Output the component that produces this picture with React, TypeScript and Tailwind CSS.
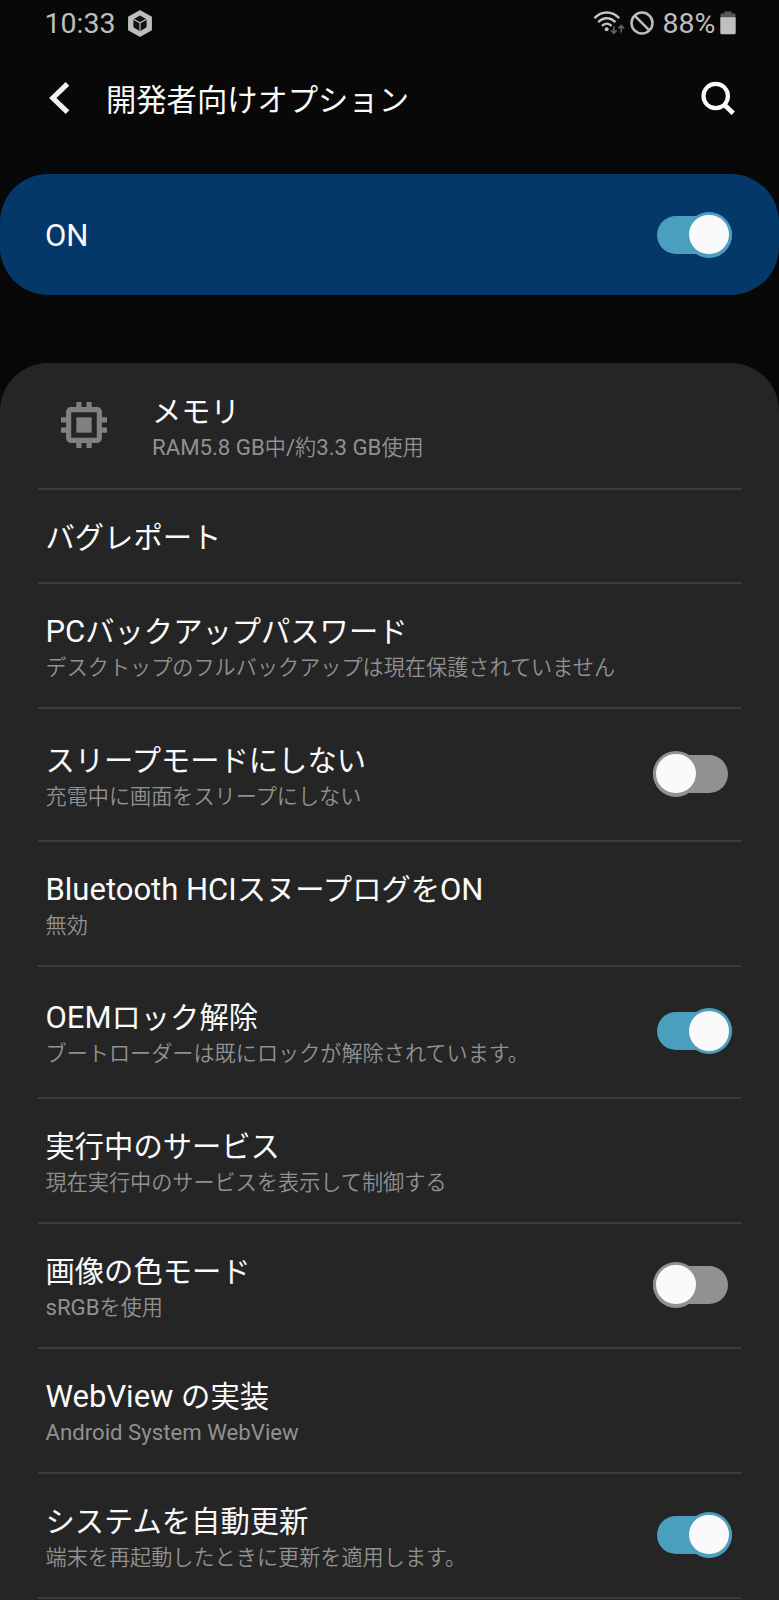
import React from "react";

type Size = "header" | "title" | "sub";

const cjkSize: Record<Size, string> = {
  header: "text-[30.3px] font-normal",
  title: "text-[29.3px] font-normal",
  sub: "text-[21.15px] font-[350]",
};

/** Splits mixed text so that Latin and Japanese runs get their own font size. */
function Mixed({ text, size }: { text: string; size: Size }) {
  const runs = text.match(/[\u0000-\u00ff]+|[^\u0000-\u00ff]+/g) ?? [];
  return (
    <>
      {runs.map((run, i) =>
        run.charCodeAt(0) > 255 ? (
          <span
            key={i}
            className={`font-['Noto_Sans_CJK_JP',sans-serif] leading-none ${cjkSize[size]}`}
          >
            {run}
          </span>
        ) : (
          <span key={i}>{run}</span>
        )
      )}
    </>
  );
}

function Switch({ on }: { on: boolean }) {
  return (
    <div
      className={`relative h-[46px] w-[75px] shrink-0 ${on ? "mr-[47px]" : "mr-[51px]"}`}
      role="switch"
      aria-checked={on}
    >
      <div
        className={`absolute inset-x-0 top-1 h-[38px] rounded-full ${on ? "bg-[#4a9fbf]" : "bg-[#919191]"}`}
      />
      <div
        className={`absolute top-0 size-[46px] rounded-full p-[3.2px] ${
          on ? "right-0 bg-[#4a9fbf]" : "left-0 bg-[#919191]"
        }`}
      >
        <div className="size-full rounded-full bg-[#fafafa]" />
      </div>
    </div>
  );
}

function CubeIcon() {
  return (
    <svg className="ml-[12.5px] h-[27px] w-[24px]" viewBox="0 0 24 27" fill="none">
      <path
        d="M12 0.8 23.2 7v13L12 26.2 0.8 20V7z"
        fill="#bebebe"
        stroke="#bebebe"
        strokeWidth="1.4"
        strokeLinejoin="round"
      />
      <path d="M12 5.600 18.600 9.300v8L12 21.200 5.400 17.300v-8z" fill="#111" />
      <path d="M5.400 9.300 12 12.800l6.600-3.500M12 12.800v8" stroke="#bebebe" strokeWidth="1.2" />
    </svg>
  );
}

function WifiIcon() {
  return (
    <svg className="h-[24px] w-[32px]" viewBox="0 0 32 24" fill="none">
      <g stroke="#c4c4c4" strokeWidth="2.400">
        <path d="M1.400 7.200C8.600 -0.400 19 -0.400 26.200 7.200" />
        <path d="M5.200 11.200C10.300 5.900 17.300 5.900 22.400 11.200" />
        <path d="M9 14.900c2.900-3 6.700-3 9.600 0" />
      </g>
      <circle cx="13.700" cy="18.200" r="2" fill="#c4c4c4" />
      <path
        d="M20.800 15.200v7M18 19.400l2.800 2.900 2.800-2.900M28.200 21.600v-7M25.400 17.400l2.800-2.900 2.800 2.900"
        stroke="#5e5e5e"
        strokeWidth="1.800"
      />
    </svg>
  );
}

function BlockIcon() {
  return (
    <svg className="ml-[5px] size-[24px]" viewBox="0 0 24 24" fill="none" stroke="#bebebe" strokeWidth="2.5">
      <circle cx="12" cy="12" r="10.500" />
      <path d="M4.600 4.600 19.400 19.400" />
    </svg>
  );
}

function BatteryIcon() {
  return (
    <svg className="ml-[4.5px] h-[24px] w-[16px]" viewBox="0 0 16 24">
      <path d="M4.500 0.500h7v2h2.500a1.500 1.500 0 0 1 1.500 1.500v3h-15V4a1.500 1.500 0 0 1 1.500-1.500h2.500z" fill="#585858" />
      <path d="M0.300 6.300h15.400v15.400a1.500 1.500 0 0 1-1.500 1.500H1.800a1.500 1.500 0 0 1-1.500-1.500z" fill="#c0c0c0" />
    </svg>
  );
}

function ChipIcon() {
  return (
    <svg className="size-[46px]" viewBox="3 3 18 18" fill="#808080">
      <path
        fillRule="evenodd"
        d="M6.800 5H9V3h2v2h2V3h2v2h2.200A1.800 1.800 0 0 1 19 6.800V9h2v2h-2v2h2v2h-2v2.200a1.800 1.800 0 0 1-1.800 1.800H15v2h-2v-2h-2v2H9v-2H6.800A1.800 1.800 0 0 1 5 17.200V15H3v-2h2v-2H3V9h2V6.800A1.800 1.800 0 0 1 6.800 5zM7 7v10h10V7z"
      />
      <path d="M9 9h6v6H9z" />
    </svg>
  );
}

interface Item {
  title: string;
  sub?: string;
  on?: boolean;
  icon?: boolean;
  height: string;
}

const items: Item[] = [
  { title: "メモリ", sub: "RAM5.8 GB中/約3.3 GB使用", icon: true, height: "h-[127px]" },
  { title: "バグレポート", height: "h-[94px]" },
  { title: "PCバックアップパスワード", sub: "デスクトップのフルバックアップは現在保護されていません", height: "h-[125px]" },
  { title: "スリープモードにしない", sub: "充電中に画面をスリープにしない", on: false, height: "h-[133px]" },
  { title: "Bluetooth HCIスヌープログをON", sub: "無効", height: "h-[125px]" },
  { title: "OEMロック解除", sub: "ブートローダーは既にロックが解除されています。", on: true, height: "h-[132px]" },
  { title: "実行中のサービス", sub: "現在実行中のサービスを表示して制御する", height: "h-[125px]" },
  { title: "画像の色モード", sub: "sRGBを使用", on: false, height: "h-[125px]" },
  { title: "WebView の実装", sub: "Android System WebView", height: "h-[125px]" },
  { title: "システムを自動更新", sub: "端末を再起動したときに更新を適用します。", on: true, height: "h-[125px]" },
];

function Row({ item }: { item: Item }) {
  return (
    <li className={`flex flex-col ${item.height}`}>
      <div className="flex min-h-0 flex-1 items-center pb-[2px]">
        {item.icon && (
          <div className="ml-[60.500px]">
            <ChipIcon />
          </div>
        )}
        <div className="flex-1 whitespace-nowrap pl-[45.500px] pt-[6px]">
          <div className="h-[38px] text-[31px] leading-[38px] text-[#fafafa]">
            <Mixed text={item.title} size="title" />
          </div>
          {item.sub && (
            <div className="h-[32px] text-[22.2px] leading-[32px] text-[#919191]">
              <Mixed text={item.sub} size="sub" />
            </div>
          )}
        </div>
        {item.on !== undefined && <Switch on={item.on} />}
      </div>
      <div className="ml-[38px] mr-[38px] h-[2px] shrink-0 bg-[#3c3c3c]" />
    </li>
  );
}

export default function App() {
  return (
    <div className="flex h-[1600px] w-full flex-col overflow-hidden bg-[#080808] font-[Roboto,'Noto_Sans_CJK_JP',sans-serif]">
      <div className="flex h-[46px] shrink-0 items-center justify-between pl-[44.500px] pr-[43px] text-[28.500px] leading-[46px] text-[#bebebe]">
        <div className="flex items-center">
          <span className="pt-[1px]">10:33</span>
          <CubeIcon />
        </div>
        <div className="flex items-center">
          <WifiIcon />
          <BlockIcon />
          <span className="ml-[9px] pt-[1px]">88%</span>
          <BatteryIcon />
        </div>
      </div>

      <header className="flex h-[128px] shrink-0 items-start pl-[48px] pr-[43px] pt-[34px]">
        <svg className="mt-[1px] h-[34px] w-[22px]" viewBox="0 0 22 34" fill="none" stroke="#f2f2f2" strokeWidth="5.200">
          <path d="M19.500 2.800 4.800 17l14.700 14.200" />
        </svg>
        <h1 className="ml-[36px] flex-1 pt-[2px] text-[31px] leading-[38px] text-[#fafafa]">
          <Mixed text="開発者向けオプション" size="header" />
        </h1>
        <svg className="size-[36px]" viewBox="0 0 36 36" fill="none" stroke="#fafafa">
          <circle cx="15.700" cy="16" r="12.200" strokeWidth="4.200" />
          <path d="M24 24.500 33.300 33.200" strokeWidth="4.800" />
        </svg>
      </header>

      <section className="flex h-[121px] shrink-0 items-center justify-between rounded-[48px] bg-[#043869] pl-[45px] text-[31px] text-[#fafafa]">
        <span className="pt-[4px]">ON</span>
        <Switch on={true} />
      </section>

      <ul className="mt-[68px] flex-1 rounded-t-[48px] bg-[#252525]">
        {items.map((item) => (
          <Row key={item.title} item={item} />
        ))}
      </ul>
    </div>
  );
}
